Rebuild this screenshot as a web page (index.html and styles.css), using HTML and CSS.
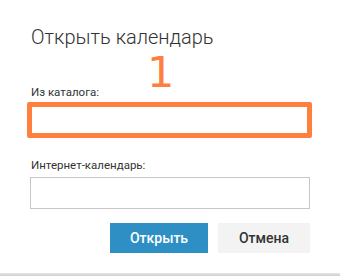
FILE: index.html
```html
<!DOCTYPE html>
<html lang="ru">
<head>
    <meta charset="UTF-8">
    <meta name="viewport" content="width=device-width, initial-scale=1.0">
    <title>Открыть календарь</title>
    <link rel="stylesheet" href="styles.css">
</head>
<body>
    <div class="dialog">
        <h1 class="dialog-title">Открыть календарь</h1>

        <div class="field field-directory">
            <label class="field-label" for="directory">Из каталога:</label>
            <div class="highlight">
                <input class="field-input plain" id="directory" type="text">
            </div>
            <span class="step-mark">1</span>
        </div>

        <div class="field field-web">
            <label class="field-label" for="web">Интернет-календарь:</label>
            <input class="field-input" id="web" type="text">
        </div>

        <div class="actions">
            <button class="btn btn-primary">Открыть</button>
            <button class="btn btn-secondary">Отмена</button>
        </div>
    </div>
    <div class="bottom-edge"></div>
</body>
</html>
```

FILE: styles.css
```css
body {
    font-family: Roboto, "Open Sans", "Liberation Sans", Arial, sans-serif;
    background-color: #fff;
    color: #333;
    margin: 0;
    padding: 0;
    height: 276px;
    display: flex;
    flex-direction: column;
    overflow: hidden;
}

.dialog {
    flex: 1;
    padding: 22px 30px 0 30px;
    display: flex;
    flex-direction: column;
}

.dialog-title {
    margin: 0 0 0 1px;
    font-size: 20px;
    line-height: 30px;
    font-weight: 300;
    color: #333;
}

.field {
    display: flex;
    flex-direction: column;
}

.field-directory {
    position: relative;
    margin-top: 32px;
}

.field-web {
    margin-top: 19px;
}

.field-label {
    font-size: 11.5px;
    line-height: 16px;
    color: #333;
    padding-left: 1px;
}

.field-directory .field-label {
    margin-bottom: 2px;
}

.field-web .field-label {
    margin-bottom: 4px;
}

.highlight {
    margin-left: -3px;
    width: 275px;
    height: 26px;
    border: 5px solid #ff7f3f;
    border-radius: 2px;
    background-color: #fff;
}

.field-input {
    box-sizing: border-box;
    width: 280px;
    height: 32px;
    border: 1px solid #c6c6c6;
    background-color: #fff;
    margin: 0;
    font-family: inherit;
}

.field-input.plain {
    width: 100%;
    height: 100%;
    border: none;
    outline: none;
}

.step-mark {
    position: absolute;
    left: 117px;
    top: -33px;
    font-family: "DejaVu Sans", sans-serif;
    font-size: 43px;
    line-height: 43px;
    color: #ff7f3f;
}

.actions {
    display: flex;
    justify-content: flex-end;
    gap: 10px;
    width: 280px;
    margin-top: 14px;
}

.btn {
    height: 30px;
    border: none;
    padding: 0;
    font-family: inherit;
    font-size: 14px;
    font-weight: 500;
    cursor: pointer;
}

.btn-primary {
    width: 98px;
    background-color: #2d8fc4;
    color: #fff;
}

.btn-secondary {
    width: 92px;
    background-color: #f3f3f3;
    color: #333;
}

.bottom-edge {
    height: 3px;
    background: linear-gradient(to bottom, #e6e6e6, #cfcfcf);
}
```
